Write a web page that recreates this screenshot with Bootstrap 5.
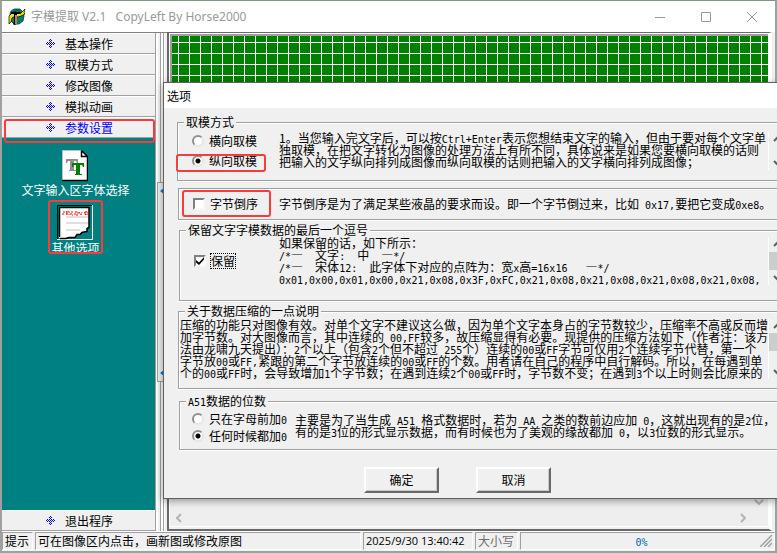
<!DOCTYPE html>
<html lang="zh-CN">
<head>
<meta charset="utf-8">
<meta name="viewport" content="width=device-width, initial-scale=1">
<title>字模提取 V2.1</title>
<link href="https://cdn.jsdelivr.net/npm/bootstrap@5.3.0/dist/css/bootstrap.min.css" rel="stylesheet">
<style>
  body { font: 12px/12px "Noto Sans CJK SC", sans-serif; color: #000; background: #f0f0f0; overflow: hidden; white-space: nowrap; }
  button { font: inherit; color: inherit; }
  .mono { font-family: "DejaVu Sans Mono", monospace; font-size: 10px; line-height: 1px; white-space: pre; }
  .app-window { border: solid #a0a0a0; border-width: 1px 2px 2px; border-top-color: #7f9a80; }

  .title-bar { height: 31px; background: #fff; color: #999; padding-left: 6px; font-family: "Noto Sans", "Noto Sans CJK SC", sans-serif; }
  .title-text { white-space: pre; margin-left: 5px; }
  .win-btn { width: 46px; height: 28px; padding: 0; border: 0; background: none; color: #999; }

  .side-bar { width: 153px; background: #008080; border-top: 1px solid #808080; }
  .side-btn { height: 21px; padding: 0 0 0 44px; gap: 10px; border: 0; border-top: 1px solid #fff; border-bottom: 1px solid #a0a0a0; background: #f0f0f0; text-align: left; }
  .side-btn svg { color: #00f; }
  .side-btn.current { color: #00f; }
  .side-item { border: 0; padding: 0; background: none; color: #fff; gap: 2px; }
  .side-icons { padding: 11px 6px 0 0; gap: 9px; }
  .ring { position: relative; }
  .ring::after { content: ""; position: absolute; inset: var(--ring, 0); border: 2px solid #f83c3c; border-radius: 3px; pointer-events: none; }

  .splitter { width: 12px; border-top: 1px solid #808080; background: linear-gradient(90deg, #a0a0a0 1px, #fff 1px 3px, #f0f0f0 3px 5px, #a0a0a0 5px 6px, #fff 6px 8px, #a0a0a0 8px 9px, #fff 9px 10px, #f0f0f0 10px); }
  .splitter-grip { width: 10px; height: 200px; margin: 149px 0 0 2px; padding: 5px 2px; border: 1px solid #a0a0a0; background: #f0f0f0; color: #0078d7; }

  .canvas-frame { border: 1px solid; border-color: #696969 #fff #696969 #696969; border-width: 1px 3px 2px 2px; background: #f0f0f0; margin-right: 3px; }
  .canvas-inner { border: solid #fff; border-width: 1px; margin: 0 0 2px 0; }
  .dot-grid { border: 2px solid #a0a0a0; border-width: 2px 0 0 2px; background: repeating-linear-gradient(90deg, transparent 0 6px, #fff 6px 7px, transparent 7px 11px), repeating-linear-gradient(180deg, transparent 0 6px, #fff 6px 7px, transparent 7px 11px), #008000; }
  .h-scroll { height: 17px; padding: 0 22px 0 6px; color: #b4b4b4; background: #eee; }
  .under-grid { height: 15px; background: #f0f0f0; }

  .status-bar { height: 20px; gap: 2px; border-top: 1px solid #fff; }
  .status-cell { border: 1px solid; border-color: #a0a0a0 #fff #fff #a0a0a0; padding: 0 2px; height: 18px; }
  .cell-tip { width: 31px; } .cell-message { width: 326px; } .cell-time { width: 110px; font: 11px/12px "Open Sans", sans-serif; } .cell-caps { width: 43px; color: #6d6d6d; }
  .progress-text { color: #0066b4; }

  .option-dialog { position: absolute; top: 82px; left: 163px; right: 0; background: #f0f0f0; border: solid #606060; border-width: 1px 0 1px 1px; box-shadow: 0 2px 8px rgba(0,0,0,.4); }
  .dialog-title { height: 25px; background: #fff; padding: 0 3px; }
  .dialog-title h1 { font: inherit; }
  .dialog-body { padding: 8px 0 5px 13px; gap: 4px; }
  .group { border: 1px solid #a0a0a0; border-right: 0; box-shadow: inset 1px 1px #fff, 0 1px #fff; padding: 0; min-width: 0; }
  .group legend { float: none; width: auto; margin: 0 0 0 6px; padding: 0 2px; font-size: 12px; line-height: 12px; background: #f0f0f0; }
  .choices { width: 101px; padding-left: 14px; }
  .group-mode .choices { row-gap: 2px; }
  .group-order .choices { width: 100px; }
  .group-comma .choices { width: 99px; }
  .group-bits .choices { width: 115px; padding-left: 12px; }
  .choice { height: 18px; gap: 5px; }
  .group-bits .choice { height: 17px; }
  .choice input { appearance: none; width: 12px; height: 12px; margin: 0; flex: none; background: #fff; border: 2px solid; border-color: #808080 #fff #fff #808080; }
  .choice input[type=radio] { border-radius: 50%; border-color: #909090 #e6e6e6 #e6e6e6 #909090; }
  .choice input[type=radio]:checked { background: radial-gradient(circle, #000 0 2px, #fff 3px); }
  .choice input[type=checkbox] { border-color: #808080 #f8f8f8 #f8f8f8 #808080; }
  .choice input[type=checkbox]:checked { background: #fff url("data:image/svg+xml,%3Csvg xmlns='http://www.w3.org/2000/svg' viewBox='0 0 8 8'%3E%3Cpath d='M0 3l3 2.5L8 0v2.5L3 8 0 5.5z'/%3E%3C/svg%3E") center/8px no-repeat; }
  .focus-text { outline: 1px dotted #000; padding: 1px 0; }
  .v-scroll { width: 9px; flex: none; border-left: 1px solid #fff; overflow: hidden; color: #606060; }
  .v-scroll svg { margin-left: 4px; flex: none; }
  .thumb { background: #cdcdcd; height: 18px; }
  .group-mode { padding: 4px 0 10px; }
  .group-order { margin: 3px 0 0 1px; height: 32px; }
  .group-comma, .group-bits { margin-left: 2px; }
  .comma-row { padding: 1px 0 15px; }
  .group-pack { margin-left: 1px; }
  .pack-row { padding: 2px 0 9px 1px; }
  .group-bits { margin-top: 2px; }
  .bits-row { padding: 3px 0 5px; }
  .dialog-actions { padding: 13px 0 0 187px; gap: 37px; }
  .push { width: 75px; height: 26px; border: 2px solid; border-color: #fff #696969 #696969 #fff; background: #f0f0f0; box-shadow: inset -1px -1px #c8c8c8; padding: 0; }
</style>
<script src="https://cdn.jsdelivr.net/npm/bootstrap@5.3.0/dist/js/bootstrap.bundle.min.js"></script>
</head>
<body>
<svg class="d-none" aria-hidden="true">
  <symbol id="gem" viewBox="0 0 9 9"><path fill="currentColor" d="M4 0h1v1H4zM3 1h1v1H3zM5 1h1v1H5zM4 2h1v1H4zM1 3h1v1H1zM3 3h1v1H3zM5 3h1v1H5zM7 3h1v1H7zM0 4h1v1H0zM2 4h1v1H2zM4 4h1v1H4zM6 4h1v1H6zM8 4h1v1H8zM1 5h1v1H1zM3 5h1v1H3zM5 5h1v1H5zM7 5h1v1H7zM4 6h1v1H4zM3 7h1v1H3zM5 7h1v1H5zM4 8h1v1H4z"/></symbol>
  <symbol id="up" viewBox="0 0 10 6"><path d="M1 5l4-4 4 4" fill="none" stroke="currentColor" stroke-width="2"/></symbol>
  <symbol id="down" viewBox="0 0 10 6"><path d="M1 1l4 4 4-4" fill="none" stroke="currentColor" stroke-width="2"/></symbol>
</svg>

<div class="app-window d-flex flex-column min-vh-100">
  <header class="title-bar d-flex align-items-center">
    <svg width="18" height="18" viewBox="0 0 18 18"><path d="M3 3l3-2h6l3 3 1 4-1 5-4 3H6l-4-4V6z" fill="#007c7c" stroke="#003c3c" stroke-width=".8"/><path d="M1 8l4-4 5-1 3 2 4-4-1 4 1 1-4 2-3 1-3-1-3 2-1 4-2 2z" fill="#f0e000" stroke="#000" stroke-width=".7"/><path d="M3 4h9l1 2H9v10l-3 1-1-1 1-2V6H3z" fill="#000"/><path d="M7 7h2v9H7z" fill="#c08050"/></svg>
    <span class="title-text flex-grow-1">字模提取 V2.1   CopyLeft By Horse2000</span>
    <button class="win-btn" aria-label="最小化"><svg width="10" height="10"><path d="M0 5.5h10" stroke="currentColor"/></svg></button>
    <button class="win-btn" aria-label="最大化"><svg width="10" height="10"><path d="M.5.5h9v9h-9z" fill="none" stroke="currentColor"/></svg></button>
    <button class="win-btn" aria-label="关闭"><svg width="10" height="10"><path d="M0 0l10 10M10 0L0 10" stroke="currentColor"/></svg></button>
  </header>

  <main class="d-flex flex-grow-1">
    <nav class="side-bar d-flex flex-column flex-shrink-0">
      <button class="side-btn d-flex align-items-center"><svg width="9" height="9"><use href="#gem"/></svg>基本操作</button>
      <button class="side-btn d-flex align-items-center"><svg width="9" height="9"><use href="#gem"/></svg>取模方式</button>
      <button class="side-btn d-flex align-items-center"><svg width="9" height="9"><use href="#gem"/></svg>修改图像</button>
      <button class="side-btn d-flex align-items-center"><svg width="9" height="9"><use href="#gem"/></svg>模拟动画</button>
      <button class="side-btn current ring d-flex align-items-center" style="--ring: 1px 0 -6px 2px"><svg width="9" height="9"><use href="#gem"/></svg>参数设置</button>
      <div class="side-icons d-flex flex-column align-items-center flex-grow-1">
        <button class="side-item d-flex flex-column align-items-center">
          <svg width="26" height="33" viewBox="0 0 26 33"><path d="M.5 1.5h19l6 6v24H.5z" fill="#fff"/><path d="M.5 31V1.5h19" fill="none" stroke="#c0c0c0"/><path d="M19.500 1.500l6 6v24H0M19.500 1.500v6h6" fill="none" stroke="#000" stroke-width="1.500"/><path d="M4 10h12v4h-1l-1-2h-2v9h2v1H7v-1h1v-9H6l-1 2H4z" fill="#909090"/><path d="M10 14h12v4h-1l-1-2h-2v9h2v1h-7v-1h1v-9h-2l-1 2h-1z" fill="#008000"/></svg>
          文字输入区字体选择
        </button>
        <button class="side-item ring d-flex flex-column align-items-center" style="--ring: -5px -3px 0 -3px">
          <svg width="36" height="35" viewBox="0 0 36 35"><path d="M.5 35V.5H35" fill="none" stroke="#000"/><path d="M35.500 0v34.500H0" fill="none" stroke="#fff"/><path d="M2 3h30v19l-2 1v3l-5 1-2 2h-3l-2 3h-6l-3 1H2z" fill="#fff"/><path d="M2.500 32V2.500H32v20l-2 1v3l-5 1-2 2h-3l-2 3h-6l-3 1H3" fill="none" stroke="#000" stroke-width="1.500"/><path d="M9 12h22M9 18h22M9 25h14" stroke="#c0c0c0"/><path d="M6 10V7h2m1 1h3V6.500H9.500V9.500h3M16 7h-2v3h2m2-3h3v3h-3zM22 7l2 3 1-3m2 1h3V6.500h-2V9.500h2M31 10V7h1" fill="none" stroke="#f00" stroke-dasharray="2 1"/></svg>
          其他选项
        </button>
      </div>
      <button class="side-btn d-flex align-items-center"><svg width="9" height="9"><use href="#gem"/></svg>退出程序</button>
    </nav>

    <div class="splitter flex-shrink-0">
      <div class="splitter-grip d-flex flex-column justify-content-between align-items-end">
        <svg width="4" height="6"><path d="M4 0v6L0 3z" fill="currentColor"/></svg>
        <svg width="4" height="6"><path d="M4 0v6L0 3z" fill="currentColor"/></svg>
      </div>
    </div>

    <section class="canvas-frame d-flex flex-column flex-grow-1">
      <div class="canvas-inner d-flex flex-column flex-grow-1">
        <div class="dot-grid flex-grow-1"></div>
        <div class="under-grid d-flex justify-content-end align-items-center pe-1"><svg width="10" height="6" color="#b4b4b4"><use href="#down"/></svg></div>
        <div class="h-scroll d-flex justify-content-between align-items-center">
          <svg width="6" height="10"><path d="M5 1L1 5l4 4" fill="none" stroke="currentColor" stroke-width="2"/></svg>
          <svg width="6" height="10"><path d="M1 1l4 4-4 4" fill="none" stroke="currentColor" stroke-width="2"/></svg>
        </div>
      </div>
    </section>
  </main>

  <footer class="status-bar d-flex">
    <div class="status-cell cell-tip d-flex align-items-center">提示</div>
    <div class="status-cell cell-message d-flex align-items-center">可在图像区内点击，画新图或修改原图</div>
    <div class="status-cell cell-time d-flex align-items-center">2025/9/30 13:40:42</div>
    <div class="status-cell cell-caps d-flex align-items-center">大小写</div>
    <div class="status-cell flex-grow-1 d-flex align-items-center"><span class="progress-text flex-grow-1 text-center"><span class="mono">0%</span></span>
      <svg width="12" height="12"><path d="M0 12L12 0M4 12l8-8M8 12l4-4" stroke="#a0a0a0" stroke-width="1.500"/></svg></div>
  </footer>
</div>

<form class="option-dialog" role="dialog" aria-labelledby="dialog-name">
  <div class="dialog-title d-flex align-items-center"><h1 id="dialog-name" class="m-0">选项</h1></div>
  <div class="dialog-body d-flex flex-column">
    <fieldset class="group">
      <legend>取模方式</legend>
      <div class="group-mode d-flex">
        <div class="choices d-flex flex-column">
          <label class="choice d-flex align-items-center"><input type="radio" name="mode">横向取模</label>
          <label class="choice ring d-flex align-items-center" style="--ring: 2px 13px -2px -16px"><input type="radio" name="mode" checked>纵向取模</label>
        </div>
        <div class="flex-grow-1">1。当您输入完文字后，可以按<span class="mono">Ctrl+Enter</span>表示您想结束文字的输入，但由于要对每个文字单<br>独取模，在把文字转化为图像的处理方法上有所不同，具体说来是如果您要横向取模的话则<br>把输入的文字纵向排列成图像而纵向取模的话则把输入的文字横向排列成图像；</div>
        <div class="v-scroll d-flex flex-column justify-content-between py-1"><svg width="10" height="6"><use href="#up"/></svg><svg width="10" height="6"><use href="#down"/></svg></div>
      </div>
    </fieldset>

    <div class="group group-order d-flex align-items-center">
      <div class="choices"><label class="choice ring d-flex align-items-center" style="--ring: -5px 8px -4px -11px"><input type="checkbox">字节倒序</label></div>
      <div>字节倒序是为了满足某些液晶的要求而设。即一个字节倒过来，比如<span class="mono"> 0x17,</span>要把它变成<span class="mono">0xe8</span>。</div>
    </div>

    <fieldset class="group group-comma">
      <legend>保留文字字模数据的最后一个逗号</legend>
      <div class="comma-row d-flex align-items-stretch">
        <div class="choices d-flex align-items-center flex-shrink-0"><label class="choice d-flex align-items-center"><input type="checkbox" checked><span class="focus-text">保留</span></label></div>
        <div class="flex-grow-1">如果保留的话，如下所示：<br><span class="mono">/*</span>—<span class="mono">  </span>文字<span class="mono">:  </span>中<span class="mono">  </span>—<span class="mono">*/</span><br><span class="mono">/*</span>—<span class="mono">  </span>宋体<span class="mono">12:  </span>此字体下对应的点阵为：宽<span class="mono">x</span>高<span class="mono">=16x16   </span>—<span class="mono">*/</span><br><span class="mono">0x01,0x00,0x01,0x00,0x21,0x08,0x3F,0xFC,0x21,0x08,0x21,0x08,0x21,0x08,0x21,0x08,</span></div>
        <div class="v-scroll d-flex flex-column justify-content-between py-1"><svg width="10" height="6"><use href="#up"/></svg><div class="thumb"></div><svg width="10" height="6"><use href="#down"/></svg></div>
      </div>
    </fieldset>

    <fieldset class="group group-pack">
      <legend>关于数据压缩的一点说明</legend>
      <div class="pack-row d-flex">
        <div class="flex-grow-1">压缩的功能只对图像有效。对单个文字不建议这么做，因为单个文字本身占的字节数较少，压缩率不高或反而增<br>加字节数。对大图像而言，其中连续的<span class="mono"> 00,FF</span>较多，故压缩显得有必要。现提供的压缩方法如下（作者注：该方<br>法由龙啸九天提出）：<span class="mono">2</span>个以上（包含<span class="mono">2</span>个但不超过<span class="mono"> 255</span>个）连续的<span class="mono">00</span>或<span class="mono">FF</span>字节可仅用<span class="mono">2</span>个连续字节代替，第一个<br>字节放<span class="mono">00</span>或<span class="mono">FF,</span>紧跟的第二个字节放连续的<span class="mono">00</span>或<span class="mono">FF</span>的个数。用者请在自己的程序中自行解码。所以，在每遇到单<br>个的<span class="mono">00</span>或<span class="mono">FF</span>时，会导致增加<span class="mono">1</span>个字节数；在遇到连续<span class="mono">2</span>个<span class="mono">00</span>或<span class="mono">FF</span>时，字节数不变；在遇到<span class="mono">3</span>个以上时则会比原来的</div>
        <div class="v-scroll d-flex flex-column py-1"><svg width="10" height="6"><use href="#up"/></svg><div class="thumb mt-1 mb-auto"></div><svg width="10" height="6"><use href="#down"/></svg></div>
      </div>
    </fieldset>

    <fieldset class="group group-bits">
      <legend><span class="mono">A51</span>数据的位数</legend>
      <div class="bits-row d-flex">
        <div class="choices flex-shrink-0">
          <label class="choice d-flex align-items-center"><input type="radio" name="bits"><span>只在字母前加<span class="mono">0</span></span></label>
          <label class="choice d-flex align-items-center"><input type="radio" name="bits" checked><span>任何时候都加<span class="mono">0</span></span></label>
        </div>
        <div class="pt-1">主要是为了当生成<span class="mono"> A51 </span>格式数据时，若为<span class="mono"> AA </span>之类的数前边应加<span class="mono"> 0</span>，这就出现有的是<span class="mono">2</span>位，<br>有的是<span class="mono">3</span>位的形式显示数据，而有时候也为了美观的缘故都加<span class="mono"> 0</span>，以<span class="mono">3</span>位数的形式显示。</div>
      </div>
    </fieldset>

    <div class="dialog-actions d-flex">
      <button type="button" class="push">确定</button>
      <button type="button" class="push">取消</button>
    </div>
  </div>
</form>
</body>
</html>
